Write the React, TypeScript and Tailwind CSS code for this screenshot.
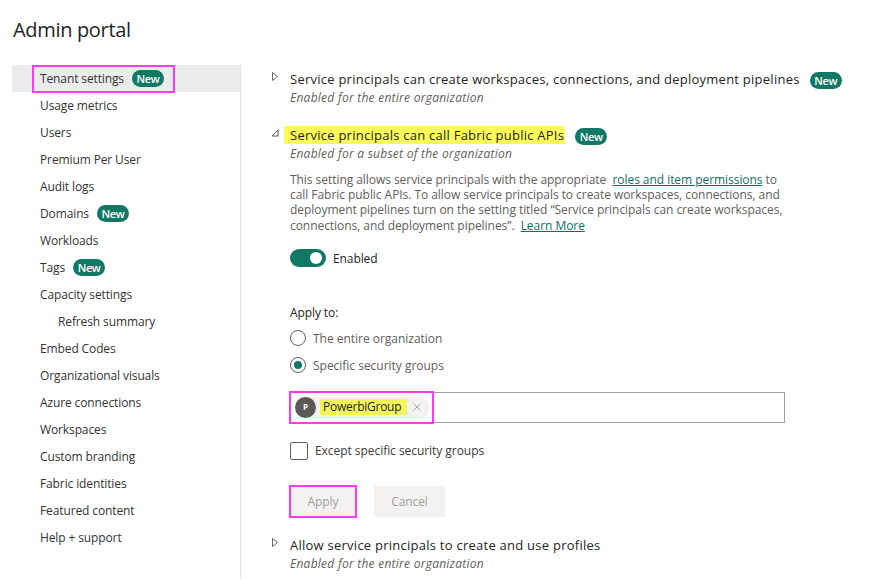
const font = "font-['Open_Sans','Noto_Sans',sans-serif]";

const navItems = [
  { label: 'Tenant settings', isNew: true, active: true },
  { label: 'Usage metrics' },
  { label: 'Users' },
  { label: 'Premium Per User' },
  { label: 'Audit logs' },
  { label: 'Domains', isNew: true },
  { label: 'Workloads' },
  { label: 'Tags', isNew: true },
  { label: 'Capacity settings' },
  { label: 'Refresh summary', indent: true },
  { label: 'Embed Codes' },
  { label: 'Organizational visuals' },
  { label: 'Azure connections' },
  { label: 'Workspaces' },
  { label: 'Custom branding' },
  { label: 'Fabric identities' },
  { label: 'Featured content' },
  { label: 'Help + support' },
];

const NewBadge = () => (
  <span className="inline-flex h-[17px] w-[32px] shrink-0 items-center justify-center rounded-full bg-[#117865] text-[11px] font-semibold leading-none tracking-[-0.4px] text-white">
    New
  </span>
);

const ChevronRight = () => (
  <svg width="8" height="12" viewBox="0 0 8 12" className="shrink-0">
    <path d="M1.5 1.5 L6.5 5.5 L1.5 9.5 Z" fill="none" stroke="#6b6470" strokeWidth="1" />
  </svg>
);

const ChevronOpen = () => (
  <svg width="8" height="12" viewBox="0 0 8 12" className="shrink-0">
    <path d="M7 3 L7 9 L1 9 Z" fill="none" stroke="#555" strokeWidth="1" />
  </svg>
);

const Sidebar = () => (
  <div className="ml-3 w-[229px] shrink-0 border-r border-[#e1e1e1] pb-[28px]">
    {navItems.map((item) => (
      <div
        key={item.label}
        className={`flex h-[27px] items-center ${item.active ? 'bg-[#ebebeb]' : ''} ${item.indent ? 'pl-[46px]' : 'pl-[28px]'}`}
      >
        <div
          className={`flex items-center gap-[8px] ${item.active ? 'h-[26px] w-[141px] outline-2 -outline-offset-1 outline-[#fb3bf0] -ml-[7px] pl-[7px]' : ''}`}
        >
          <span className="whitespace-nowrap text-[12px] tracking-[-0.12px] text-[#333]">{item.label}</span>
          {item.isNew && <NewBadge />}
        </div>
      </div>
    ))}
  </div>
);

const SettingHeader = ({
  title,
  subtitle,
  open,
  highlight,
  isNew,
}: {
  title: string;
  subtitle: string;
  open?: boolean;
  highlight?: boolean;
  isNew?: boolean;
}) => (
  <div>
    <div className="flex h-[18px] items-center">
      <div className="flex w-[19px] -translate-y-[2px] justify-start">{open ? <ChevronOpen /> : <ChevronRight />}</div>
      <span
        className={`whitespace-nowrap text-[13px] leading-[18px] tracking-[0.25px] text-[#252423] ${highlight ? 'bg-[#fbfb5a] -ml-[6px] pl-[6px] pr-px' : ''}`}
      >
        {title}
      </span>
      {isNew && (
        <span className="ml-[10px]">
          <NewBadge />
        </span>
      )}
    </div>
    <div className="ml-[19px] mt-[1px] text-[12px] leading-[17px] italic tracking-[0.25px] text-[#605e5c]">{subtitle}</div>
  </div>
);

const Radio = ({ label, checked }: { label: string; checked?: boolean }) => (
  <div className="flex h-[27px] items-center gap-[7px]">
    <span className="flex h-[16px] w-[16px] items-center justify-center rounded-full border border-[#605e5c]">
      {checked && <span className="h-[8px] w-[8px] rounded-full bg-[#117865]" />}
    </span>
    <span className="pt-px text-[12px] tracking-[-0.02px] text-[#605e5c]">{label}</span>
  </div>
);

export default function App() {
  return (
    <div className={`h-[580px] w-[869px] overflow-hidden bg-white ${font}`}>
      <h1 className="pl-[13px] pt-[15px] text-[20px] leading-[30px] tracking-[-0.33px] text-[#252423]">Admin portal</h1>
      <div className="mt-[20px] flex">
        <Sidebar />
        <div className="pl-[30px] pt-[5px]">
          <SettingHeader
            title="Service principals can create workspaces, connections, and deployment pipelines"
            subtitle="Enabled for the entire organization"
            isNew
          />
          <div className="mt-[20px]">
            <SettingHeader
              title="Service principals can call Fabric public APIs"
              subtitle="Enabled for a subset of the organization"
              open
              highlight
              isNew
            />
          </div>
          <div className="ml-[19px]">
            <p className="mt-[10px] w-[496px] text-[12px] leading-[15.2px] tracking-[-0.05px] text-[#605e5c]">
              This setting allows service principals with the appropriate&nbsp;{' '}
              <span className="text-[#0e6f63] underline">roles and item permissions</span> to call Fabric public APIs. To
              allow service principals to create workspaces, connections, and deployment pipelines turn on the setting
              titled “Service principals can create workspaces, connections, and deployment pipelines”.&nbsp;{' '}
              <span className="text-[#0e6f63] underline">Learn More</span>
            </p>
            <div className="mt-[16px] flex items-center gap-[7px]">
              <span className="flex h-[18px] w-[36px] items-center justify-end rounded-full bg-[#117865] pr-[4px]">
                <span className="h-[12px] w-[12px] rounded-full bg-white" />
              </span>
              <span className="pt-px text-[12px] tracking-[-0.1px] text-[#252423]">Enabled</span>
            </div>
            <div className="mt-[36px] text-[12px] leading-[17px] tracking-[-0.1px] text-[#252423]">Apply to:</div>
            <div className="mt-[4px]">
              <Radio label="The entire organization" />
              <Radio label="Specific security groups" checked />
            </div>
            <div className="mt-[13px] flex h-[31px] w-[495px] items-center border border-[#a19f9d]">
              <div className="-ml-px flex h-[31px] w-[143px] items-center pl-[5px] outline-2 -outline-offset-1 outline-[#fb3bf0]">
                <div className="flex h-[21px] w-[135px] items-center rounded-full bg-[#f3f2f1]">
                  <span className="flex h-[21px] w-[21px] items-center justify-center rounded-full bg-[#5c5a58] text-[8px] font-bold text-white">
                    P
                  </span>
                  <span className="ml-[4px] bg-[#f4f55a] pl-[3px] pr-[6px] text-[12px] leading-[16px] tracking-[-0.25px] text-[#252423]">
                    PowerbiGroup
                  </span>
                  <svg width="8" height="8" viewBox="0 0 8 8" className="ml-[6px]">
                    <path d="M0.5 0.5 L7.5 7.5 M7.5 0.5 L0.5 7.5" stroke="#a6a6a6" strokeWidth="1" />
                  </svg>
                </div>
              </div>
            </div>
            <div className="mt-[19px] flex items-center gap-[7px]">
              <span className="h-[18px] w-[18px] rounded-[2px] border border-[#605e5c]" />
              <span className="text-[12px] tracking-[-0.05px] text-[#3b3a39]">Except specific security groups</span>
            </div>
            <div className="mt-[26px] flex gap-[18px]">
              <div className="flex h-[31px] w-[66px] items-center justify-center bg-[#f3f2f1] pt-px text-[12px] tracking-[-0.1px] text-[#a19f9d] outline-2 -outline-offset-1 outline-[#fb3bf0]">
                Apply
              </div>
              <div className="flex h-[31px] w-[71px] items-center justify-center bg-[#f3f2f1] pt-px text-[12px] tracking-[-0.1px] text-[#a19f9d]">
                Cancel
              </div>
            </div>
          </div>
          <div className="mt-[19px]">
            <SettingHeader
              title="Allow service principals to create and use profiles"
              subtitle="Enabled for the entire organization"
            />
          </div>
        </div>
      </div>
    </div>
  );
}
